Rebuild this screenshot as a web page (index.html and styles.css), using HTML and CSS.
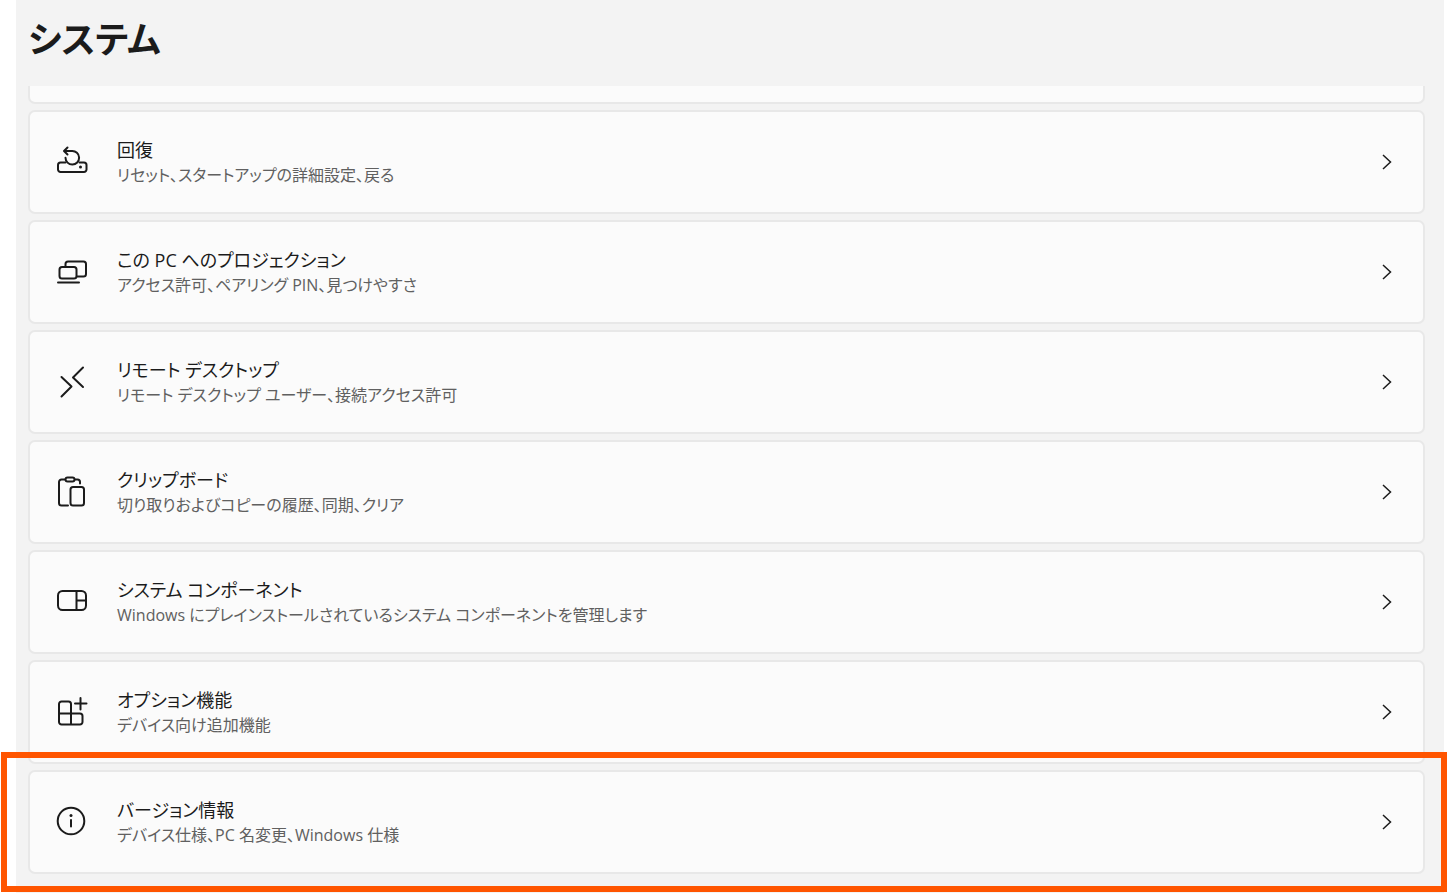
FILE: index.html
```html
<!DOCTYPE html>
<html lang="ja">
<head>
  <meta charset="UTF-8">
  <meta name="viewport" content="width=device-width, initial-scale=1.0">
  <title>システム</title>
  <link rel="stylesheet" href="styles.css">
</head>
<body>
  <main class="settings">
    <h1>システム</h1>

    <!-- end of the card that is scrolled out of view -->
    <div class="card-cut"></div>

    <ul class="card-list">
      <li>
        <a class="card" href="#recovery">
          <svg class="icon" viewBox="0 0 32 32">
            <path d="M9.500 16.500H4.500a2.500 2.500 0 0 0-2.500 2.500v4.500a2.500 2.500 0 0 0 2.500 2.500h23.500a2.500 2.500 0 0 0 2.500-2.500V19a2.500 2.500 0 0 0-2.500-2.500h-4.500"/>
            <path d="M11.500 1.500 8 5l3.500 3.500M8.500 5H16a6.800 6.800 0 1 1-6.500 6.800"/>
            <circle class="dot" cx="24.500" cy="21" r="1.500"/>
          </svg>
          <span class="text"><span class="title">回復</span><span class="desc">リセット、スタートアップの詳細設定、戻る</span></span>
          <svg class="chevron" viewBox="0 0 10 16"><path d="M1 1l7.500 7L1 15"/></svg>
        </a>
      </li>
      <li>
        <a class="card" href="#projection">
          <svg class="icon" viewBox="0 0 32 32">
            <path d="M9.500 10V8a2.500 2.500 0 0 1 2.500-2.500h15.500A2.500 2.500 0 0 1 30 8v10a2.500 2.500 0 0 1-2.500 2.500H21"/>
            <rect x="3.500" y="11" width="17" height="11.500" rx="2.500"/>
            <path d="M2 26.500h21"/>
          </svg>
          <span class="text"><span class="title">この PC へのプロジェクション</span><span class="desc">アクセス許可、ペアリング PIN、見つけやすさ</span></span>
          <svg class="chevron" viewBox="0 0 10 16"><path d="M1 1l7.500 7L1 15"/></svg>
        </a>
      </li>
      <li>
        <a class="card" href="#remote">
          <svg class="icon" viewBox="0 0 32 32">
            <path d="M5.500 11 15.500 20.500 5.500 30.500M27 1.500 17 11.500 27 21"/>
          </svg>
          <span class="text"><span class="title">リモート デスクトップ</span><span class="desc">リモート デスクトップ ユーザー、接続アクセス許可</span></span>
          <svg class="chevron" viewBox="0 0 10 16"><path d="M1 1l7.500 7L1 15"/></svg>
        </a>
      </li>
      <li>
        <a class="card" href="#clipboard">
          <svg class="icon" viewBox="0 0 32 32">
            <path d="M12 29.500H5.500A2.500 2.500 0 0 1 3 27V6a2.500 2.500 0 0 1 2.500-2.500H9M19 3.500h2.500A2.500 2.500 0 0 1 24 6v1.500"/>
            <rect x="9.500" y="1.500" width="9" height="4" rx="2"/>
            <rect x="14.500" y="11" width="13.500" height="18.500" rx="2.500"/>
          </svg>
          <span class="text"><span class="title">クリップボード</span><span class="desc">切り取りおよびコピーの履歴、同期、クリア</span></span>
          <svg class="chevron" viewBox="0 0 10 16"><path d="M1 1l7.500 7L1 15"/></svg>
        </a>
      </li>
      <li>
        <a class="card" href="#components">
          <svg class="icon" viewBox="0 0 32 32">
            <rect x="2" y="5" width="28" height="19" rx="4.500"/>
            <path d="M20.500 5v19M20.500 14.500H30"/>
          </svg>
          <span class="text"><span class="title">システム コンポーネント</span><span class="desc">Windows にプレインストールされているシステム コンポーネントを管理します</span></span>
          <svg class="chevron" viewBox="0 0 10 16"><path d="M1 1l7.500 7L1 15"/></svg>
        </a>
      </li>
      <li>
        <a class="card" href="#optional">
          <svg class="icon" viewBox="0 0 32 32">
            <path d="M15 17.500V8A2.500 2.500 0 0 0 12.500 5.500h-7A2.500 2.500 0 0 0 3 8v18a2.500 2.500 0 0 0 2.500 2.500h18.500a2.500 2.500 0 0 0 2.500-2.500v-6a2.500 2.500 0 0 0-2.500-2.500zM15 17v11.500M3 17.500h12"/>
            <path d="M24.500 2v11.500M19 7.500h11.500"/>
          </svg>
          <span class="text"><span class="title">オプション機能</span><span class="desc">デバイス向け追加機能</span></span>
          <svg class="chevron" viewBox="0 0 10 16"><path d="M1 1l7.500 7L1 15"/></svg>
        </a>
      </li>
      <li class="highlight">
        <a class="card" href="#about">
          <svg class="icon" viewBox="0 0 32 32">
            <circle cx="15" cy="15" r="13.300"/>
            <path d="M15 14v6.500"/>
            <circle class="dot" cx="15" cy="9.500" r="1.500"/>
          </svg>
          <span class="text"><span class="title">バージョン情報</span><span class="desc">デバイス仕様、PC 名変更、Windows 仕様</span></span>
          <svg class="chevron" viewBox="0 0 10 16"><path d="M1 1l7.500 7L1 15"/></svg>
        </a>
      </li>
    </ul>
  </main>
</body>
</html>
```
FILE: styles.css
```css
* {
  box-sizing: border-box;
}

body {
  margin: 0;
  background-color: #fff;
  color: #1b1b1b;
  font-family: "Open Sans", "Noto Sans CJK JP", sans-serif;
  font-feature-settings: "palt";
}

.settings {
  min-height: 100vh;
  margin: 0 3px 0 16px;
  padding: 0 19px 19px 12px;
  background-color: #f3f3f3;
}

h1 {
  height: 86px;
  margin: 0;
  padding-top: 16px;
  font-size: 36px;
  font-weight: 600;
  line-height: 48px;
}

.card-cut {
  height: 18px;
  margin-bottom: 6px;
  border: 2px solid #e8e8e8;
  border-top: none;
  border-radius: 0 0 7px 7px;
  background-color: #fbfbfb;
}

.card-list {
  display: flex;
  flex-direction: column;
  gap: 6px;
  margin: 0;
  padding: 0;
  list-style: none;
}

.card {
  display: flex;
  align-items: center;
  height: 104px;
  padding: 0 31px 0 26px;
  border: 2px solid #e8e8e8;
  border-radius: 7px;
  background-color: #fbfbfb;
  color: inherit;
  text-decoration: none;
}

.card:hover {
  background-color: #f6f6f6;
}

.icon {
  width: 32px;
  height: 32px;
  flex: none;
  fill: none;
  stroke: #1b1b1b;
  stroke-width: 2;
  stroke-linecap: round;
  stroke-linejoin: round;
}

.icon .dot {
  fill: #1b1b1b;
  stroke: none;
}

.text {
  flex: 1;
  margin-left: 29px;
}

.title,
.desc {
  display: block;
}

.title {
  font-size: 18px;
  line-height: 26px;
}

.desc {
  color: #606060;
  font-size: 16px;
  line-height: 24px;
}

.chevron {
  width: 10px;
  height: 16px;
  flex: none;
  fill: none;
  stroke: #1b1b1b;
  stroke-width: 1.5;
}

.highlight {
  position: relative;
}

/* orange frame drawn over the card and its surroundings */
.highlight::after {
  content: "";
  position: absolute;
  top: -18px;
  right: -22px;
  bottom: -18px;
  left: -27px;
  border: 6px solid #ff5500;
  pointer-events: none;
}
```
